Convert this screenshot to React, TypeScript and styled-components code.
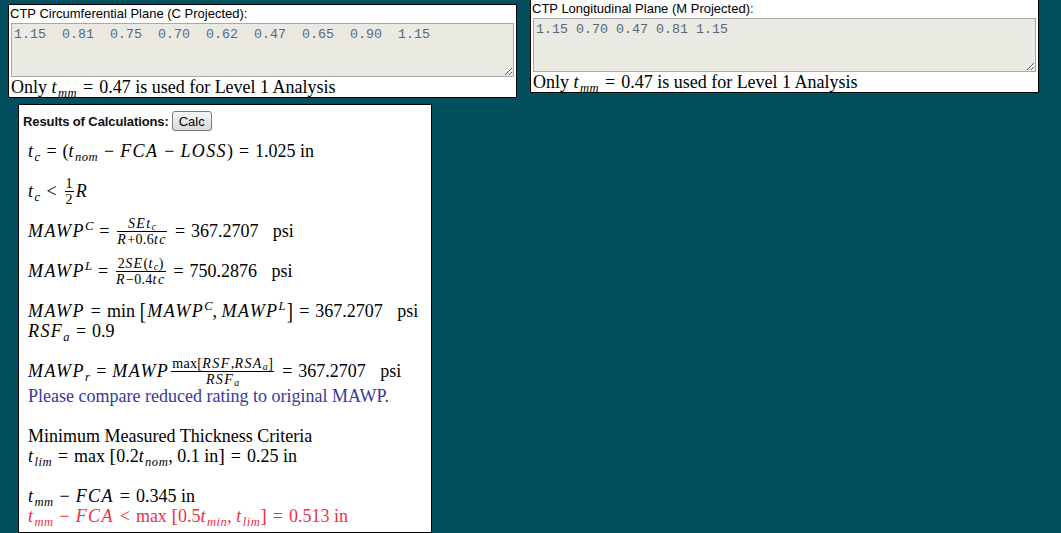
import styled, { createGlobalStyle } from "styled-components";

const GlobalStyle = createGlobalStyle`
  body {
    margin: 0;
    background: #034f5d;
    overflow: hidden;
  }
`;

const circValues = "1.15  0.81  0.75  0.70  0.62  0.47  0.65  0.90  1.15";
const longValues = "1.15 0.70 0.47 0.81 1.15";

const Plane = ({ label, values, shift }: { label: string; values: string; shift: number }) => (
  <SPlane $shift={shift}>
    <SPlaneLabel>{label}</SPlaneLabel>
    <SReadings defaultValue={values} spellCheck={false} />
    <SNote>
      Only <V>t</V>
      <Sub>mm</Sub>
      <Op>=</Op>0.47 is used for Level 1 Analysis
    </SNote>
  </SPlane>
);

const App = () => {
  return (
    <SPage>
      <GlobalStyle />
      <STopRow>
        <Plane label="CTP Circumferential Plane (C Projected):" values={circValues} shift={4} />
        <Plane label="CTP Longitudinal Plane (M Projected):" values={longValues} shift={-1} />
      </STopRow>

      <SResults>
        <SResultsHead>
          <SHeadLabel>Results of Calculations:</SHeadLabel>
          <SCalc>Calc</SCalc>
        </SResultsHead>

        <SMath>
          <SLine>
            <V>t</V>
            <Sub>c</Sub>
            <Op>=</Op>(<V>t</V>
            <Sub>nom</Sub>
            <Op>−</Op>
            <V>FCA</V>
            <Op>−</Op>
            <V>LOSS</V>)<Op>=</Op>1.025 in
          </SLine>
          <SBlank />
          <SLine>
            <V>t</V>
            <Sub>c</Sub>
            <Op>&lt;</Op>
            <Frac num="1" den="2" />
            <V>R</V>
          </SLine>
          <SBlank />
          <SLine>
            <V>MAWP</V>
            <Sup>C</Sup>
            <Op>=</Op>
            <Frac
              num={
                <>
                  <V>SEt</V>
                  <Sub>c</Sub>
                </>
              }
              den={
                <>
                  <V>R</V>+0.6<V>tc</V>
                </>
              }
            />
            <Op>=</Op>367.2707 <SUnit>psi</SUnit>
          </SLine>
          <SBlank />
          <SLine>
            <V>MAWP</V>
            <Sup>L</Sup>
            <Op>=</Op>
            <Frac
              num={
                <>
                  2<V>SE</V>(<V>t</V>
                  <Sub>c</Sub>)
                </>
              }
              den={
                <>
                  <V>R</V>−0.4<V>tc</V>
                </>
              }
            />
            <Op>=</Op>750.2876 <SUnit>psi</SUnit>
          </SLine>
          <SBlank />
          <SLine>
            <V>MAWP</V>
            <Op>=</Op>min <SBig>[</SBig>
            <V>MAWP</V>
            <Sup>C</Sup>, <V>MAWP</V>
            <Sup>L</Sup>
            <SBig>]</SBig>
            <Op>=</Op>367.2707 <SUnit>psi</SUnit>
          </SLine>
          <SLine>
            <V>RSF</V>
            <Sub>a</Sub>
            <Op>=</Op>0.9
          </SLine>
          <SBlank />
          <SLine $tall>
            <V>MAWP</V>
            <Sub>r</Sub>
            <Op>=</Op>
            <V>MAWP</V>
            <Frac
              num={
                <>
                  max[<V>RSF</V>,<V>RSA</V>
                  <Sub>a</Sub>]
                </>
              }
              den={
                <>
                  <V>RSF</V>
                  <Sub>a</Sub>
                </>
              }
            />
            <Op>=</Op>367.2707 <SUnit>psi</SUnit>
          </SLine>
          <SLine $tone="blue">Please compare reduced rating to original MAWP.</SLine>
          <SBlank />
          <SLine>Minimum Measured Thickness Criteria</SLine>
          <SLine>
            <V>t</V>
            <Sub>lim</Sub>
            <Op>=</Op>max <SMid>[</SMid>0.2<V>t</V>
            <Sub>nom</Sub>, 0.1 in<SMid>]</SMid>
            <Op>=</Op>0.25 in
          </SLine>
          <SBlank />
          <SLine>
            <V>t</V>
            <Sub>mm</Sub>
            <Op>−</Op>
            <V>FCA</V>
            <Op>=</Op>0.345 in
          </SLine>
          <SLine $tone="red">
            <V>t</V>
            <Sub>mm</Sub>
            <Op>−</Op>
            <V>FCA</V>
            <Op>&lt;</Op>max <SMid>[</SMid>0.5<V>t</V>
            <Sub>min</Sub>, <V>t</V>
            <Sub>lim</Sub>
            <SMid>]</SMid>
            <Op>=</Op>0.513 in
          </SLine>
        </SMath>
      </SResults>
    </SPage>
  );
};

const Frac = ({ num, den }: { num: React.ReactNode; den: React.ReactNode }) => (
  <SFrac>
    <SNum>{num}</SNum>
    <span>{den}</span>
  </SFrac>
);

const SPage = styled.div`
  display: flex;
  flex-direction: column;
  align-items: flex-start;
`;

const STopRow = styled.div`
  display: flex;
  align-items: flex-start;
  gap: 13px;
  padding-left: 8px;
`;

const SPlane = styled.div<{ $shift: number }>`
  box-sizing: border-box;
  width: 509px;
  margin-top: ${(p) => p.$shift}px;
  padding: 0 2px;
  border: 1px solid #000;
  background: #fff;
`;

const SPlaneLabel = styled.div`
  height: 18px;
  line-height: 18px;
  font-family: "Liberation Sans", Arial, sans-serif;
  font-size: 13px;
  color: #000;
  margin-left: -1px;
`;

const SReadings = styled.textarea`
  display: block;
  box-sizing: border-box;
  width: 503px;
  height: 54px;
  margin: 0;
  padding: 3px 2px 2px;
  border: 1px solid #a9a9a9;
  background: #eae9e2;
  color: #566a7e;
  font-family: "Liberation Mono", "Courier New", monospace;
  font-size: 13.33px;
  line-height: 15px;
  white-space: pre;
  outline: none;
`;

const SNote = styled.div`
  height: 20px;
  line-height: 20px;
  font-family: "Liberation Serif", "Times New Roman", serif;
  font-size: 18px;
  color: #000;
  white-space: nowrap;
`;

const SResults = styled.div`
  box-sizing: border-box;
  width: 414px;
  height: 429px;
  margin: 6px 0 0 18px;
  border: 1px solid #000;
  background: #fff;
`;

const SResultsHead = styled.div`
  display: flex;
  align-items: center;
  gap: 3px;
  padding: 6px 0 0 4px;
  height: 20px;
`;

const SHeadLabel = styled.span`
  font-family: "Liberation Sans", Arial, sans-serif;
  font-size: 13px;
  font-weight: bold;
  color: #111;
  letter-spacing: -0.1px;
`;

const SCalc = styled.button`
  box-sizing: border-box;
  height: 20px;
  padding: 0 6px;
  border: 1px solid #7a7a7a;
  border-radius: 3px;
  background: linear-gradient(#f6f6f6, #dcdcdc);
  font-family: "Liberation Sans", Arial, sans-serif;
  font-size: 13px;
  color: #000;
`;

const SMath = styled.div`
  padding: 10px 0 0 9px;
  font-family: "Liberation Serif", "Times New Roman", serif;
  font-size: 18px;
`;

const SLine = styled.div<{ $tall?: boolean; $tone?: "blue" | "red" }>`
  height: ${(p) => (p.$tall ? 25 : 20)}px;
  line-height: 20px;
  white-space: nowrap;
  color: ${(p) => (p.$tone === "blue" ? "#38389c" : p.$tone === "red" ? "#f0303f" : "#000")};
`;

const SBlank = styled.div`
  height: 20px;
`;

const V = styled.i`
  font-style: italic;
  letter-spacing: 1.4px;
`;

const Sub = styled.sub`
  font-size: 0.7em;
  font-style: italic;
  line-height: 0;
  vertical-align: -0.3em;
  letter-spacing: 0.5px;
`;

const Sup = styled.sup`
  font-size: 0.7em;
  font-style: italic;
  line-height: 0;
  vertical-align: 0.55em;
`;

const Op = styled.span`
  margin: 0 0.33em;
`;

const SUnit = styled.span`
  margin-left: 0.55em;
`;

const SFrac = styled.span`
  display: inline-flex;
  flex-direction: column;
  align-items: center;
  vertical-align: 9px;
  margin: -10px 2px -10px;
  font-size: 0.78em;
  line-height: 1;
  letter-spacing: 0.3px;

  sub {
    vertical-align: -0.2em;
  }
`;

const SNum = styled.span`
  padding: 0 1px 1px;
  border-bottom: 1px solid currentColor;
  align-self: stretch;
  text-align: center;
`;

const SBig = styled.span`
  display: inline-block;
  font-size: 1.3em;
  line-height: 0;
  vertical-align: -0.08em;
  transform: scaleX(0.8);
`;

const SMid = styled.span`
  display: inline-block;
  font-size: 1.1em;
  line-height: 0;
`;

export default App;
